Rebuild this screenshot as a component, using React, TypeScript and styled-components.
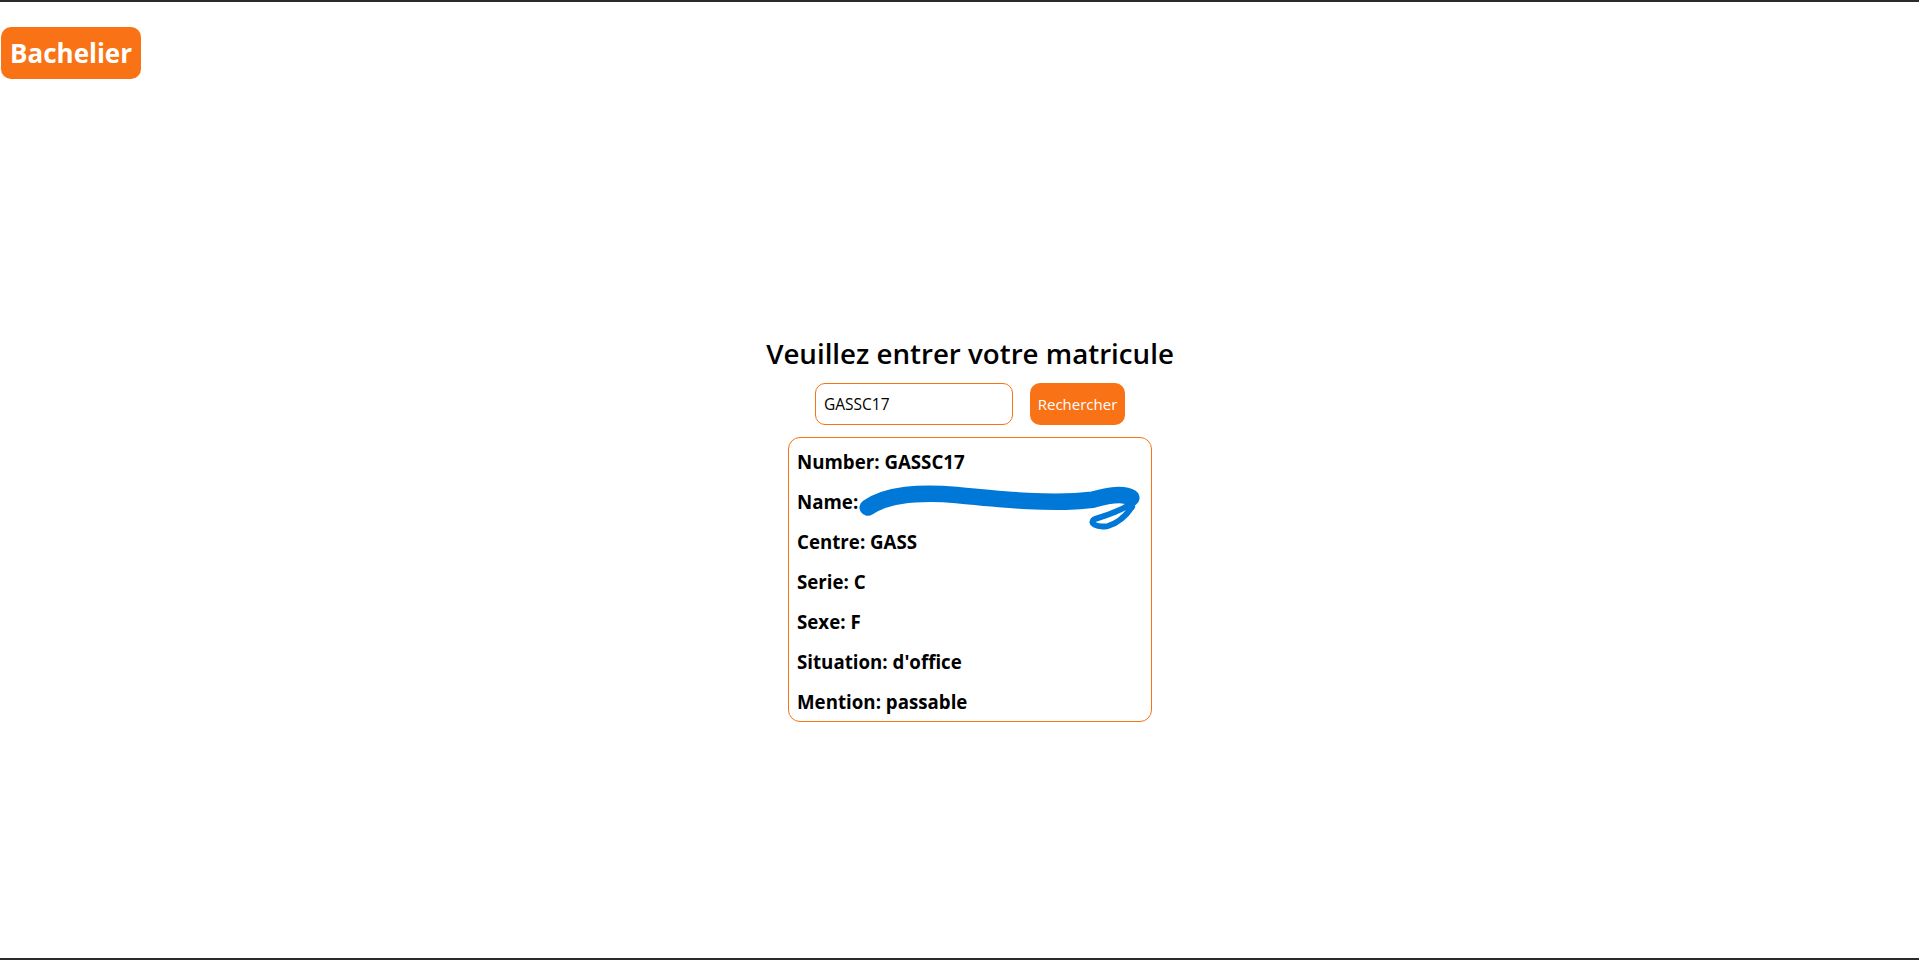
import styled, { createGlobalStyle } from 'styled-components'

const GlobalStyle = createGlobalStyle`
  body {
    margin: 0;
    font-family: 'Open Sans', 'Noto Sans', sans-serif;
    color: #000;
    background: #fff;
  }
`

const rows = [
  { label: 'Number', value: 'GASSC17' },
  { label: 'Name', value: null },
  { label: 'Centre', value: 'GASS' },
  { label: 'Serie', value: 'C' },
  { label: 'Sexe', value: 'F' },
  { label: 'Situation', value: "d'office" },
  { label: 'Mention', value: 'passable' },
]

function App() {
  return (
    <Page>
      <GlobalStyle />
      <Header>
        <Brand>Bachelier</Brand>
      </Header>
      <Main>
        <Title>Veuillez entrer votre matricule</Title>
        <SearchRow>
          <SearchInput defaultValue="GASSC17" />
          <SearchButton type="button">Rechercher</SearchButton>
        </SearchRow>
        <ResultCard>
          {rows.map((r) => (
            <Row key={r.label}>
              {r.label}:{' '}
              {r.value === null ? (
                <Redacted>
                  {/* blue marker scribble hiding the name */}
                  <Scribble viewBox="0 0 290 50" width="282" height="49">
                    <path
                      d="M9 24 C30 10 62 8 100 11 C150 16 200 21 240 16 C258 11 272 9 280 14"
                      fill="none"
                      stroke="#0078d7"
                      strokeWidth="17"
                      strokeLinecap="round"
                      strokeLinejoin="round"
                    />
                    <path
                      d="M280 20 C266 29 252 33 242 36 C236 40 244 45 256 43 C266 40 275 32 281 23"
                      fill="none"
                      stroke="#0078d7"
                      strokeWidth="6"
                      strokeLinecap="round"
                      strokeLinejoin="round"
                    />
                  </Scribble>
                </Redacted>
              ) : (
                r.value
              )}
            </Row>
          ))}
        </ResultCard>
      </Main>
    </Page>
  )
}

const Page = styled.div`
  box-sizing: border-box;
  height: 960px;
  border-top: 2px solid #2b2b2b;
  border-bottom: 2px solid #2b2b2b;
  display: flex;
  flex-direction: column;
`

const Header = styled.header`
  padding: 25px 0 0 1px;
`

const Brand = styled.div`
  display: inline-block;
  height: 52px;
  line-height: 52px;
  padding: 0 9px;
  border-radius: 10px;
  background-color: #f97316;
  color: #fff;
  font-size: 26px;
  font-weight: 700;
`

const Main = styled.main`
  display: flex;
  flex-direction: column;
  align-items: center;
  padding: 256px 0 0 21px;
`

const Title = styled.h2`
  margin: 0;
  font-size: 27.7px;
  font-weight: 600;
  line-height: 36px;
`

const SearchRow = styled.div`
  display: flex;
  gap: 17px;
  margin-top: 12px;
`

const SearchInput = styled.input`
  box-sizing: border-box;
  width: 198px;
  height: 42px;
  padding: 0 8px;
  border: 1px solid #f97316;
  border-radius: 10px;
  font-family: inherit;
  font-size: 15.5px;
  color: #000;
  outline: none;
`

const SearchButton = styled.button`
  width: 95px;
  height: 42px;
  border: none;
  border-radius: 10px;
  background-color: #f97316;
  color: #fff;
  font-family: inherit;
  font-size: 15px;
  cursor: pointer;
`

const ResultCard = styled.section`
  box-sizing: border-box;
  width: 364px;
  height: 285px;
  margin-top: 12px;
  padding: 12px 8px 8px;
  border: 1px solid #f97316;
  border-radius: 12px;
  display: flex;
  flex-direction: column;
  gap: 16px;
`

const Row = styled.p`
  margin: 0;
  font-size: 18.7px;
  font-weight: 700;
  line-height: 24px;
  white-space: nowrap;
`

const Redacted = styled.span`
  position: relative;
  display: inline-block;
  width: 276px;
  height: 24px;
  vertical-align: top;
`

const Scribble = styled.svg`
  position: absolute;
  left: -4px;
  top: -6px;
`

export default App
